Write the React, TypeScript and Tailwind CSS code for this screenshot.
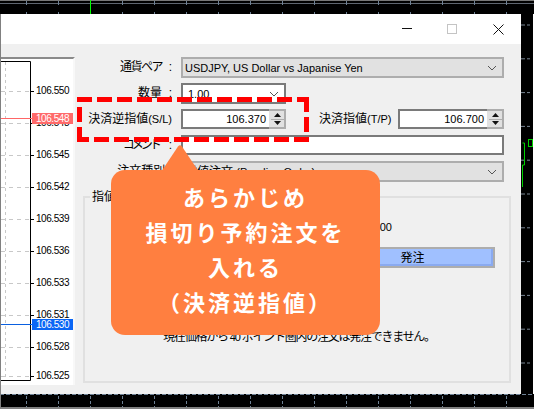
import React from 'react';

const uiFont = "font-['Liberation_Sans','Noto_Sans_CJK_JP',sans-serif]";

const prices = [
  { label: '106.550', y: 91 },
  { label: '106.548', y: 123 },
  { label: '106.545', y: 155 },
  { label: '106.542', y: 187 },
  { label: '106.539', y: 219 },
  { label: '106.536', y: 251 },
  { label: '106.533', y: 283 },
  { label: '106.531', y: 315 },
  { label: '106.528', y: 347 },
  { label: '106.525', y: 376 },
];

const CHART_TOP = 59;
const ticks = Array.from({ length: 16 }, (_, i) => 26 + i * 32);
const sideTicks = Array.from({ length: 12 }, (_, i) => 11 + i * 33.8);

const Latin: React.FC<{ children: React.ReactNode }> = ({ children }) => <span className="text-[11px]">{children}</span>;

const Chevron: React.FC = () => (
  <svg width="10" height="6" viewBox="0 0 10 6" className="shrink-0">
    <path d="M1 1l4 4 4-4" fill="none" stroke="#555" strokeWidth="1" />
  </svg>
);

const Combo: React.FC<{ children: React.ReactNode; white?: boolean; className?: string }> = ({ children, white, className }) => (
  <div
    className={`h-[21px] flex items-center justify-between pl-[2px] pr-[5px] border-2 text-[12px] ${
      white ? 'bg-white border-[#7a7a7a]' : 'bg-[#e1e1e1] border-[#adadad]'
    } ${className ?? ''}`}
  >
    <span className="whitespace-nowrap">{children}</span>
    <Chevron />
  </div>
);

const SpinEdit: React.FC<{ value: string; className: string }> = ({ value, className }) => (
  <div className={`h-[20px] flex ${className}`}>
    <div className="flex-1 bg-white border-2 border-r-0 border-[#7a7a7a] flex items-center justify-end pr-[3px] text-[11px]">
      {value}
    </div>
    <div className="w-[17px] flex flex-col border-2 border-l-0 border-[#adadad] bg-[#e1e1e1] pl-[2px]">
      <div className="flex-1 flex items-center justify-center border-b border-[#adadad]">
        <svg width="7" height="4" viewBox="0 0 7 4"><path d="M3.5 0L7 4H0z" fill="#111" /></svg>
      </div>
      <div className="flex-1 flex items-center justify-center">
        <svg width="7" height="4" viewBox="0 0 7 4"><path d="M0 0h7L3.5 4z" fill="#111" /></svg>
      </div>
    </div>
  </div>
);

const FormRow: React.FC<{ label: React.ReactNode; children: React.ReactNode }> = ({ label, children }) => (
  <div className="flex items-start h-[21px]">
    <div className="w-[89px] h-[20px] leading-[20px] text-right text-[12px] whitespace-nowrap mr-[9px]">{label}</div>
    <div className="flex-1 min-w-0">{children}</div>
  </div>
);

const PriceChart: React.FC = () => (
  <div className="relative w-[74px] h-[328px] bg-white border-t-2 border-t-[#8a8a8a] border-r-2 border-r-[#f8f8f8] shrink-0">
    <svg width="72" height="326" className="absolute left-0 top-0">
      <path d="M0 2.5H29.5V321.5H0" fill="none" stroke="#000" strokeWidth="1" />
      <line x1="4.5" y1="3" x2="4.5" y2="321" stroke="#c8c8c8" strokeDasharray="3 3" />
      {prices.map((p) => (
        <g key={p.label}>
          <line x1="0" x2="29" y1={p.y - CHART_TOP + 0.5} y2={p.y - CHART_TOP + 0.5} stroke="#c8c8c8" strokeDasharray="4 4" />
          <line x1="30" x2="33" y1={p.y - CHART_TOP + 0.5} y2={p.y - CHART_TOP + 0.5} stroke="#000" />
        </g>
      ))}
      <line x1="0" x2="31" y1="59.5" y2="59.5" stroke="#ff6666" />
      <line x1="0" x2="31" y1="265.5" y2="265.5" stroke="#0a60e0" />
    </svg>
    {prices.map((p) => (
      <div
        key={p.label}
        className="absolute left-[35px] text-[10px] leading-[12px] tracking-[-0.45px] text-black"
        style={{ top: p.y - CHART_TOP - 6 }}
      >
        {p.label}
      </div>
    ))}
    <div className="absolute left-[31px] top-[54px] w-[41px] h-[11px] bg-[#ff6a6a] text-white text-[10px] leading-[11px] tracking-[-0.45px] pl-[4px]">
      106.548
    </div>
    <div className="absolute left-[31px] top-[260px] w-[41px] h-[11px] bg-[#0a66f5] text-white text-[10px] leading-[11px] tracking-[-0.45px] pl-[4px]">
      106.530
    </div>
  </div>
);

const OrderForm: React.FC = () => (
  <div className="flex-1 min-w-0 flex flex-col pl-[8px] pr-[17px]">
    <div className="flex flex-col gap-[5px]">
      <FormRow label={<><span className="tracking-[-1.5px]">通貨ペア</span> &nbsp;:</>}>
        <Combo><Latin>USDJPY, US Dollar vs Japanise Yen</Latin></Combo>
      </FormRow>
      <FormRow label={<>数量 &nbsp;:</>}>
        <Combo white className="w-[105px] pl-[5px]"><Latin>1.00</Latin></Combo>
      </FormRow>
      <FormRow label={<>決済逆指値<Latin>(S/L)</Latin></>}>
        <div className="flex items-center">
          <SpinEdit value="106.370" className="w-[105px]" />
          <div className="w-[71px] ml-[33px] mr-[8px] h-[20px] leading-[20px] text-[12px] whitespace-nowrap">決済指値<Latin>(T/P)</Latin></div>
          <SpinEdit value="106.700" className="flex-1" />
        </div>
      </FormRow>
      <FormRow label={<><span className="tracking-[-3px]">コメント</span> &nbsp;&nbsp;:</>}>
        <div className="h-[20px] bg-white border-2 border-[#7a7a7a]" />
      </FormRow>
      <FormRow label={<>注文種別 :</>}>
        <Combo>指値注文 <Latin>(Pending Order)</Latin></Combo>
      </FormRow>
    </div>
    <div className="relative mt-[14px] h-[187px] -mr-[7px] border-2 border-[#e0e0e0] flex flex-col">
      <div className="absolute left-[5px] -top-[10px] bg-[#f0f0f0] px-[2px] text-[12px]">指値注文</div>
      <div className="mt-[20px] h-[18px] flex items-center justify-end pr-[117px] text-[11px]">価格 106.500</div>
      <div className="mt-[11px] ml-auto mr-[14px] w-[165px] h-[21px] border-2 border-[#adadad] bg-[#a0c0ff] flex items-center justify-center text-[12px] shadow-[inset_-2px_-2px_0_#8aaaf0]">
        発注
      </div>
      <div className="mt-[60px] pl-[4px] text-center text-[12px] tracking-[-1.25px] whitespace-nowrap">現在価格から <Latin>40</Latin> ポイント圏内の注文は発注できません。</div>
    </div>
  </div>
);

const Annotation: React.FC = () => (
  <>
    <svg width="534" height="410" className="absolute left-0 top-0 pointer-events-none">
      <g stroke="#ff0000" strokeWidth="5" strokeDasharray="15 5" fill="none">
        <line x1="77" y1="99.5" x2="309" y2="99.5" />
        <line x1="306.5" y1="97" x2="306.5" y2="141" />
        <line x1="309" y1="139.5" x2="77" y2="139.5" />
        <line x1="79.5" y1="142" x2="79.5" y2="97" />
      </g>
      <path d="M161 172L178 146.5Q180 144 182 146.5L199 172z" fill="#ff7f40" />
    </svg>
    <div className="absolute left-[111px] top-[170px] w-[269px] h-[165px] pb-[7px] rounded-[14px] bg-[#ff7f40] flex flex-col items-center justify-center text-white font-['Noto_Sans_CJK_JP',sans-serif] font-bold text-[22px] leading-[35px] tracking-[3px]">
      <div>あらかじめ</div>
      <div>損切り予約注文を</div>
      <div>入れる</div>
      <div>（決済逆指値）</div>
    </div>
  </>
);

export default function App() {
  return (
    <div className={`relative w-[534px] h-[410px] overflow-hidden bg-white text-black flex flex-col ${uiFont}`}>
      <svg width="534" height="14" className="block shrink-0 bg-black">
        <rect width="534" height="1" fill="#777" />
        <line x1="0" x2="534" y1="3.5" y2="3.5" stroke="#5f6670" />
        {ticks.map((x) => (
          <g key={x}>
            <line x1={x + 0.5} x2={x + 0.5} y1="1" y2="5" stroke="#6f8296" />
            <line x1={x + 0.5} x2={x + 0.5} y1="12" y2="14" stroke="#6f8296" />
          </g>
        ))}
        <line x1="90.5" x2="90.5" y1="0" y2="14" stroke="#00ff00" />
      </svg>

      <div className="flex h-[380px]">
        <div className="w-px bg-[#808080] shrink-0" />
        <div className="w-[520px] flex flex-col">
          <div className="h-[30px] bg-white flex items-center justify-end shrink-0">
            <svg width="10" height="10" viewBox="0 0 10 10" className="mr-[35px]">
              <line x1="0" x2="10" y1="4.5" y2="4.5" stroke="#111" />
            </svg>
            <svg width="10" height="10" viewBox="0 0 10 10" className="mr-[36px]">
              <rect x="0.5" y="0.5" width="9" height="9" fill="none" stroke="#c4c4c4" />
            </svg>
            <svg width="11" height="11" viewBox="0 0 11 11" className="mr-[17px]">
              <path d="M0.5 0.5l10 10M10.5 0.5l-10 10" stroke="#111" />
            </svg>
          </div>
          <div className="flex-1 flex items-start bg-[#f0f0f0] pt-[13px]">
            <PriceChart />
            <OrderForm />
          </div>
        </div>
        <svg width="12" height="380" className="block shrink-0 bg-black">
          {sideTicks.map((y) => (
            <g key={y} stroke="#7a8794">
              <line x1="0" x2="4" y1={y} y2={y} />
              <line x1="6" x2="9" y1={y} y2={y} />
            </g>
          ))}
          <path d="M1.5 173V151H3.5V129H1.5" fill="none" stroke="#00d000" />
          <rect x="7.5" y="125.5" width="4" height="7" fill="none" stroke="#00d000" />
        </svg>
        <div className="w-px bg-white shrink-0" />
      </div>

      <svg width="534" height="13" className="block shrink-0 bg-black">
        <line x1="0" x2="534" y1="0.5" y2="0.5" stroke="#6f8296" strokeDasharray="4 2" />
        {ticks.map((x) => (
          <line key={x} x1={x + 0.5} x2={x + 0.5} y1="2" y2="13" stroke="#6f8296" strokeDasharray="3 2" />
        ))}
        <rect width="1" height="13" fill="#808080" />
      </svg>
      <div className="h-[2px] bg-[#808080] shrink-0" />

      <Annotation />
    </div>
  );
}
